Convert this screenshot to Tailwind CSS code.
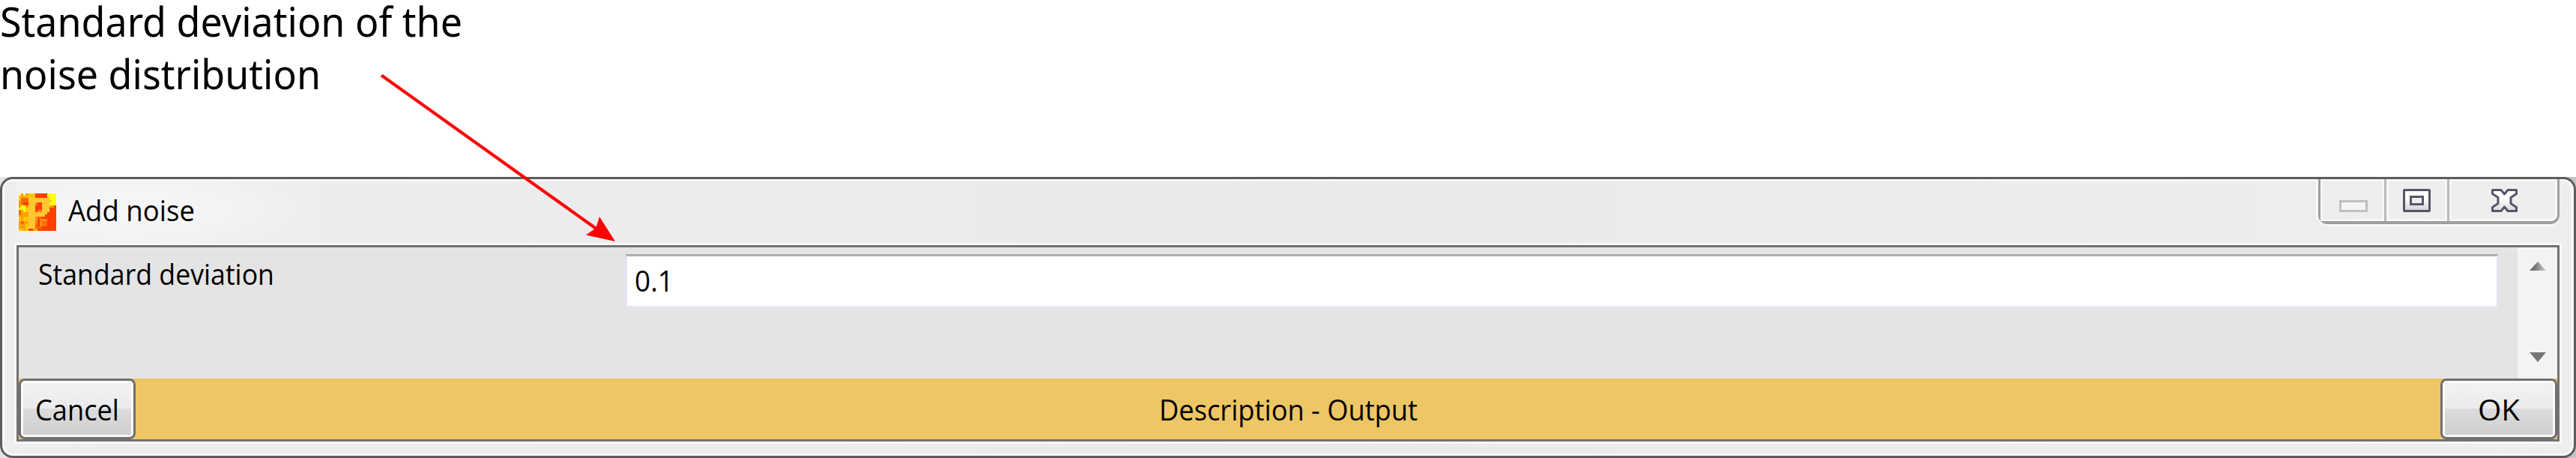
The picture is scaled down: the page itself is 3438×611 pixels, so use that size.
<!DOCTYPE html>
<html lang="en">
<head>
<meta charset="utf-8">
<title>Add noise</title>
<script src="https://cdn.jsdelivr.net/npm/@tailwindcss/browser@4"></script>
</head>
<body class="relative flex h-[611px] w-[3438px] flex-col overflow-hidden bg-white font-['Open_Sans','Noto_Sans',sans-serif] text-[39px] whitespace-nowrap text-black">
  <header class="h-[236px] font-['Noto_Sans',sans-serif] text-[55px]">
    <svg class="block h-[140px] w-[640px] overflow-visible" fill="currentColor">
      <text x="0" y="49" textLength="617" lengthAdjust="spacingAndGlyphs">Standard deviation of the</text>
      <text x="0" y="118.500" textLength="428" lengthAdjust="spacingAndGlyphs">noise distribution</text>
    </svg>
  </header>

  <div class="bg-[linear-gradient(to_right,#e4e4e4,#c4c4c4)]">
  <main class="flex h-[375px] flex-col rounded-[17px] border-[3px] border-[#5c5c5c] bg-[#ebebeb] bg-linear-to-r from-[#eeeeee] via-[#eaeaea] to-[#eeeeee] px-[19px] shadow-[inset_0_0_0_3px_#f8f8f8]">
    <div class="flex h-[88px] items-start justify-between bg-[radial-gradient(ellipse_260px_70px_at_150px_40px,#f5f5f5_35%,transparent)]">
      <div class="flex items-start pt-[19px] pl-[3px]">
        <svg class="h-[50px] w-[50px]" viewBox="0 0 50 50" shape-rendering="crispEdges">
          <path fill="#ff4000" d="M0 0h50v50H0z"/>
          <path fill="#ffa000" d="M0 0h13v50H0z"/>
          <path fill="#ffc400" d="M0 0h3v9H0zM9 3h4v3H9zM13 0h9v6h-9zM6 31h7v6H6zM9 41h4v9H9zM0 47h6v3H0zM0 31h3v6H0zM22 47h3v3h-3z"/>
          <path fill="#ff6400" d="M3 6h10v9H3zM0 22h3v7H0zM3 37h4v4H3zM13 6h6v3h-6zM22 31h9v16h-9z"/>
          <path fill="#ff4000" d="M6 12h7v4H6zM25 34h6v10h-6z"/>
          <path fill="#ffff10" d="M38 0h12v16h-9V6h-3zM3 16h6v6H3zM0 19h3v3H0zM6 22h3v3H6z"/>
          <path fill="#ffff90" d="M0 0h3v3H0zM6 0h3v3H6z"/>
          <path fill="#ffcc00" d="M38 3h3v6h-3zM41 9h3v3h-3zM9 19h4v6H9z"/>
          <path fill="#ff8c10" d="M28 34h10v10H28zM19 31h6v9h-3v10h-3z"/>
          <path fill="#ff6c08" d="M31 37h7v7h-7z"/>
          <path fill="#ff9600" d="M41 16h6v3h-6zM31 6h7v3h-7z"/>
          <path fill="#ffc832" fill-rule="evenodd" d="M13 6h25v3h3v16h-3v3h-3v3H22v16h-9zM22 12v13h9V12z"/>
          <path fill="#ff8020" d="M22 12h3v4h-3zM25 22h6v3h-6z"/>
        </svg>
        <svg class="ml-[15px] h-[50px] w-[176px] overflow-visible" fill="currentColor"><text x="1" y="37" textLength="169" lengthAdjust="spacingAndGlyphs">Add noise</text></svg>
      </div>
      <div class="flex h-[60px] w-[322px] rounded-b-[12px] border-x-[3px] border-b-[4px] border-[#9e9e9e] shadow-[0_3px_0_#f7f7f7,-3px_0_0_#f7f7f7]">
        <div class="flex w-[88px] shrink-0 items-start border-r-[3px] border-[#b9b9b9] pt-[28px] pl-[25px] shadow-[inset_0_0_0_3px_#f6f6f6]">
          <div class="h-[16px] w-[38px] border-[3px] border-[#c0c0c0] bg-[#f4f4f4]"></div>
        </div>
        <div class="flex w-[84px] shrink-0 items-start border-r-[3px] border-[#b9b9b9] pt-[13px] pl-[22px] shadow-[inset_0_0_0_3px_#f6f6f6]">
          <div class="h-[31px] w-[37px] rounded-[2px] border-[3px] border-[#55566a] bg-linear-to-b from-white from-40% to-[#d4d4d4] px-[6px] py-[6px]">
            <div class="h-[13px] w-[19px] border-[3px] border-[#55566a] bg-[#eeeeee]"></div>
          </div>
        </div>
        <div class="flex grow items-start rounded-br-[9px] pt-[13px] pl-[56px] shadow-[inset_0_0_0_3px_#f6f6f6]">
          <svg class="h-[31px] w-[35px]" viewBox="0 0 35 31">
            <defs><linearGradient id="x" x2="0" y2="1"><stop offset=".4" stop-color="#fff"/><stop offset="1" stop-color="#d8d8d8"/></linearGradient></defs>
            <path fill="url(#x)" stroke="#55566a" stroke-width="3" stroke-linejoin="round" d="M1.500 1.500H13l4.500 5.500L22 1.500h11.500v5L26 11.500v8l7.500 5v5H22L17.500 24 13 29.500H1.500v-5L9 19.500v-8L1.500 6.500z"/>
          </svg>
        </div>
      </div>
    </div>

    <div class="flex h-[262px] flex-col border-[3px] border-[#727272] shadow-[0_0_0_3px_#f7f7f7]">
      <section class="flex h-[175px] shrink-0 bg-[#e4e4e4]">
        <div class="flex grow items-start pt-[9px] pl-[24px]">
          <svg class="h-[60px] w-[785px] shrink-0 overflow-visible" fill="currentColor"><text x="2" y="41" textLength="315" lengthAdjust="spacingAndGlyphs">Standard deviation</text></svg>
          <div class="h-[72px] w-[2501px] shrink-0 border-[3px] border-x-[#e1e4ec] border-t-[#abadb3] border-b-[#e3e9ef] bg-white">
            <svg class="h-[60px] w-[80px] overflow-visible" fill="currentColor"><text x="10" y="47" textLength="52" lengthAdjust="spacingAndGlyphs">0.1</text></svg>
          </div>
        </div>
        <div class="flex w-[53px] shrink-0 flex-col items-center justify-between bg-[#f3f3f3] pt-[19px] pb-[22px]">
          <svg class="h-[12px] w-[22px]" viewBox="0 0 22 12"><defs><linearGradient id="u"><stop offset=".3" stop-color="#707070"/><stop offset="1" stop-color="#d0d0d0"/></linearGradient></defs><path fill="url(#u)" d="M11 0l11 12H0z"/></svg>
          <svg class="h-[13px] w-[22px]" viewBox="0 0 22 13"><path fill="#757575" d="M0 0h22L11 13z"/></svg>
        </div>
      </section>
      <footer class="flex h-[81px] shrink-0 items-start justify-between bg-[#edc665]">
        <button class="flex h-[81px] w-[156px] rounded-[8px] border-[3px] border-[#707070] bg-[linear-gradient(#f3f3f3,#ebebeb_50%,#dcdcdc_50%,#cdcdcd)] shadow-[inset_0_0_0_3px_#fafafa]">
          <svg class="h-[75px] w-[150px] overflow-visible" fill="currentColor"><text x="19" y="53" textLength="112" lengthAdjust="spacingAndGlyphs">Cancel</text></svg>
        </button>
        <svg class="h-[81px] w-[350px] overflow-visible" fill="currentColor"><text x="3" y="56" textLength="345" lengthAdjust="spacingAndGlyphs">Description - Output</text></svg>
        <button class="flex h-[81px] w-[156px] rounded-[8px] border-[3px] border-[#707070] bg-[linear-gradient(#f3f3f3,#ebebeb_50%,#dcdcdc_50%,#cdcdcd)] shadow-[inset_0_0_0_3px_#fafafa]">
          <svg class="h-[75px] w-[150px] overflow-visible" fill="currentColor"><text x="47" y="53" textLength="56" lengthAdjust="spacingAndGlyphs">OK</text></svg>
        </button>
      </footer>
    </div>
  </main>
  </div>

  <svg class="absolute top-0 left-0 h-[340px] w-[860px]">
    <path d="M509 100.500L797 306" stroke="#f00" stroke-width="4.200"/>
    <path fill="#f00" d="M821 322l-39-8.500L795.500 304l4.500-15z"/>
  </svg>
</body>
</html>
